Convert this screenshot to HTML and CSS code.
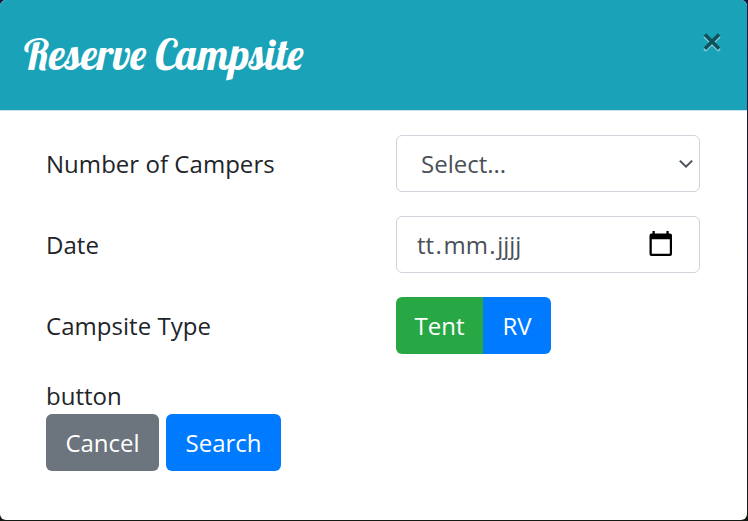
FILE: index.html
```html
<!DOCTYPE html>
<html lang="en">
<head>
<meta charset="utf-8">
<title>Reserve Campsite</title>
<link rel="stylesheet" href="styles.css">
</head>
<body>
<div class="modal">
  <header class="modal-header">
    <h5 class="modal-title">Reserve Campsite</h5>
    <button class="close" aria-label="Close">
      <svg class="cross" width="20" height="20" viewBox="0 0 20 20" fill="none" stroke-width="3.500"><path stroke="#8ccfda" d="M2.600 4.100l14.800 14.300M17.400 4.100L2.600 18.400"/><path stroke="#0d515c" d="M2.900 2.500l14.200 14.200M17.100 2.500L2.900 16.700"/></svg>
    </button>
  </header>
  <form class="modal-body">
    <div class="row">
      <label class="label">Number of Campers</label>
      <div class="control select"><span>Select...</span>
        <svg class="chevron" width="16" height="10" viewBox="0 0 16 10"><path d="M1.800 1.600 8 7.700l6.200-6.100" fill="none" stroke="#495057" stroke-width="2"/></svg>
      </div>
    </div>
    <div class="row">
      <label class="label">Date</label>
      <div class="control date"><span class="date-text"><span class="part">tt</span>.<span class="part">mm</span>.<span class="part">jjjj</span></span>
        <svg class="calendar" width="24" height="26" viewBox="0 0 24 26"><path fill="#000" fill-rule="evenodd" d="M3.500 0h2.300v2.400h11.600V0h2.300v2.400H21a2 2 0 0 1 2 2V23a2 2 0 0 1-2 2H2.500a2 2 0 0 1-2-2V4.400a2 2 0 0 1 2-2h1zM2.800 8.300v14.400h18V8.300z"/></svg>
      </div>
    </div>
    <div class="row">
      <label class="label">Campsite Type</label>
      <div class="group">
        <button type="button" class="btn tent">Tent</button><button type="button" class="btn rv">RV</button>
      </div>
    </div>
    <div class="caption">button</div>
    <div class="actions">
      <button type="button" class="btn cancel">Cancel</button>
      <button type="button" class="btn search">Search</button>
    </div>
  </form>
</div>
</body>
</html>
```
FILE: styles.css
```css
* { box-sizing: border-box; }
body {
  margin: 0;
  width: 748px;
  height: 521px;
  overflow: hidden;
  background: linear-gradient(#17153c, #101018 70%, #141a12);
  color: #212529;
  font: 24px/36px "Open Sans", sans-serif;
}
.modal {
  width: 747px;
  height: 520px;
  overflow: hidden;
  border-radius: 6px;
  background: #fff;
}
.modal-header {
  display: flex;
  justify-content: space-between;
  height: 111px;
  padding: 25px 25px 0 24px;
  background: #19a2b8;
  border-bottom: 1px solid #c9e3ea;
}
.modal-title {
  margin: 0;
  color: #fff;
  font: 500 42px/60px Lobster, "Liberation Serif", serif;
  white-space: nowrap;
}
.close {
  display: flex;
  width: 20px;
  height: 34px;
  padding: 7px 0 0;
  border: 0;
  background: none;
}
.modal-body {
  padding: 24px 47px 0 46px;
}
.row {
  display: grid;
  grid-template-columns: 350px 304px;
  align-items: center;
  height: 57px;
  margin-bottom: 24px;
}
.label { letter-spacing: 0.04px; }
.control {
  display: flex;
  align-items: center;
  justify-content: space-between;
  height: 57px;
  border: 1px solid #ced4da;
  border-radius: 6px;
  color: #495057;
}
.select { padding: 0 5px 0 24px; }
.date { padding: 0 26px 0 19px; }
.calendar { margin-top: -2px; }
.part { padding: 0 1.500px; }
.part:first-child { padding-left: 1px; }
.group { display: flex; }
.btn {
  height: 57px;
  padding: 0;
  border: 0;
  border-radius: 6px;
  color: #fff;
  font: inherit;
}
.tent {
  width: 87px;
  background: #28a745;
  border-radius: 6px 0 0 6px;
}
.rv {
  width: 68px;
  background: #007bff;
  border-radius: 0 6px 6px 0;
}
.caption { margin-top: 24px; }
.actions {
  display: flex;
  gap: 7px;
}
.cancel { width: 113px; background: #6c757d; }
.search { width: 115px; background: #007bff; }
```
